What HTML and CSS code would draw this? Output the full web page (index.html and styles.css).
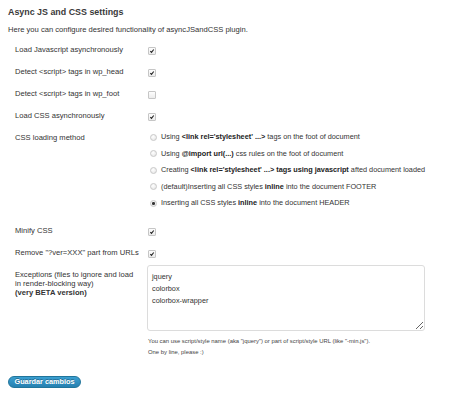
FILE: index.html
```html
<!DOCTYPE html>
<html lang="en">
<head>
    <meta charset="UTF-8">
    <title>Async JS and CSS settings</title>
    <link rel="stylesheet" href="styles.css">
</head>
<body>
    <div class="wrap">
        <h2>Async JS and CSS settings</h2>
        <p class="intro">Here you can configure desired functionality of asyncJSandCSS plugin.</p>

        <form class="form-table">
            <div class="row">
                <label class="th">Load Javascript asynchronously</label>
                <div class="td"><span class="check on"><svg viewBox="0 0 8 8"><path d="M1.8 4.2 L3.3 5.8 L6.3 2" /></svg></span></div>
            </div>
            <div class="row">
                <label class="th">Detect &lt;script&gt; tags in wp_head</label>
                <div class="td"><span class="check on"><svg viewBox="0 0 8 8"><path d="M1.8 4.2 L3.3 5.8 L6.3 2" /></svg></span></div>
            </div>
            <div class="row">
                <label class="th">Detect &lt;script&gt; tags in wp_foot</label>
                <div class="td"><span class="check"></span></div>
            </div>
            <div class="row">
                <label class="th">Load CSS asynchronously</label>
                <div class="td"><span class="check on"><svg viewBox="0 0 8 8"><path d="M1.8 4.2 L3.3 5.8 L6.3 2" /></svg></span></div>
            </div>
            <div class="row row-radios">
                <label class="th">CSS loading method</label>
                <div class="td radios">
                    <div class="radio-item"><span class="radio"></span>Using&nbsp;<b>&lt;link rel='stylesheet' ...&gt;</b>&nbsp;tags on the foot of document</div>
                    <div class="radio-item"><span class="radio"></span>Using&nbsp;<b>@import url(...)</b>&nbsp;css rules on the foot of document</div>
                    <div class="radio-item"><span class="radio"></span>Creating&nbsp;<b>&lt;link rel='stylesheet' ...&gt; tags using javascript</b>&nbsp;afted document loaded</div>
                    <div class="radio-item"><span class="radio"></span>(default)Inserting all CSS styles&nbsp;<b>inline</b>&nbsp;into the document FOOTER</div>
                    <div class="radio-item"><span class="radio on"></span>Inserting all CSS styles&nbsp;<b>inline</b>&nbsp;into the document HEADER</div>
                </div>
            </div>
            <div class="row">
                <label class="th">Minify CSS</label>
                <div class="td"><span class="check on"><svg viewBox="0 0 8 8"><path d="M1.8 4.2 L3.3 5.8 L6.3 2" /></svg></span></div>
            </div>
            <div class="row">
                <label class="th">Remove "?ver=XXX" part from URLs</label>
                <div class="td"><span class="check on"><svg viewBox="0 0 8 8"><path d="M1.8 4.2 L3.3 5.8 L6.3 2" /></svg></span></div>
            </div>
            <div class="row row-exceptions">
                <label class="th multi">Exceptions (files to ignore and load in render-blocking way)<br><b>(very BETA version)</b></label>
                <div class="td">
                    <textarea class="exceptions">jquery
colorbox
colorbox-wrapper</textarea>
                    <p class="help first">You can use script/style name (aka "jquery") or part of script/style URL (like "-min.js").</p>
                    <p class="help">One by line, please :)</p>
                </div>
            </div>
        </form>

        <button class="button-primary">Guardar cambios</button>
    </div>
</body>
</html>
```

FILE: styles.css
```css
body {
    margin: 0;
    font-family: "Liberation Sans", Arial, sans-serif;
    font-size: 7.6px;
    color: #333;
    background-color: #fff;
}
.wrap {
    padding: 6px 8px 0 8px;
}
h2 {
    margin: 0;
    font-size: 8.9px;
    line-height: 12px;
    font-weight: bold;
    color: #3a3a3a;
}
.intro {
    margin: 7px 0 0 0;
    line-height: 10px;
    color: #333;
}
.form-table {
    margin-top: 4px;
    padding-left: 7px;
}
.row {
    display: grid;
    grid-template-columns: 133px 1fr;
    padding: 6px 0;
    line-height: 10px;
}
.th {
    padding-right: 8px;
    color: #333;
}
.td {
    display: flex;
    flex-direction: column;
    align-items: flex-start;
}
.check {
    display: block;
    width: 6px;
    height: 6px;
    margin-top: 2px;
    border: 1px solid #c6c6c6;
    border-radius: 1px;
    background: linear-gradient(#fdfdfd, #ececec);
}
.check svg {
    display: block;
    width: 6px;
    height: 6px;
    fill: none;
    stroke: #222;
    stroke-width: 1.5;
}
.row-radios {
    padding: 2px 0 8px 0;
}
.row-radios .th {
    padding-top: 4px;
}
.radios {
    font-size: 7.3px;
    line-height: 16.5px;
}
.radio-item {
    display: flex;
    align-items: center;
    white-space: nowrap;
}
.radio {
    display: inline-block;
    width: 5px;
    height: 5px;
    margin: 0 4px 0 2px;
    border: 1px solid #c8c8c8;
    border-radius: 50%;
    background: radial-gradient(circle at 40% 35%, #fff, #e2e2e2);
    position: relative;
}
.radio.on::after {
    content: "";
    position: absolute;
    left: 1.2px;
    top: 1.2px;
    width: 2.6px;
    height: 2.6px;
    border-radius: 50%;
    background-color: #333;
}
.radio-item b {
    color: #222;
}
.row-exceptions {
    padding: 1px 0 0 0;
}
.th.multi {
    padding-top: 5px;
    line-height: 9px;
}
.exceptions {
    box-sizing: border-box;
    width: 278px;
    height: 66px;
    margin: 0 0 0 -1px;
    padding: 5px 4px;
    border: 1px solid #dcdcdc;
    border-radius: 3px;
    font-family: "Liberation Sans", Arial, sans-serif;
    font-size: 7.3px;
    line-height: 12px;
    color: #333;
    resize: vertical;
}
.help {
    margin: 2px 0 0 0;
    font-size: 5.9px;
    line-height: 9px;
    color: #444;
}
.help.first {
    margin-top: 6.5px;
}
.button-primary {
    margin-top: 19px;
    height: 12px;
    width: 73px;
    padding: 0;
    border: 1px solid #21759b;
    border-radius: 7px;
    background: linear-gradient(#3a9fd1, #2680b0);
    color: #fff;
    font-family: "Liberation Sans", Arial, sans-serif;
    font-size: 7.3px;
    font-weight: bold;
    line-height: 10px;
    text-shadow: 0 -1px 0 rgba(0, 0, 0, 0.3);
    cursor: pointer;
}
```
